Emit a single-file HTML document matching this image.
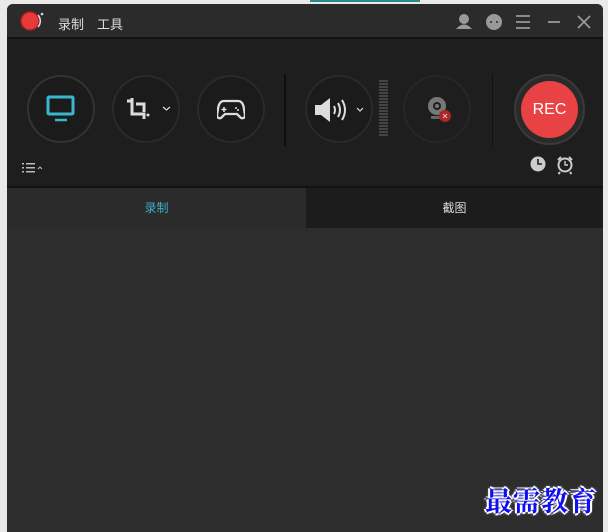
<!DOCTYPE html>
<html><head><meta charset="utf-8"><style>
*{margin:0;padding:0;box-sizing:border-box}
body{width:608px;height:532px;background:#e9e9e9;position:relative;overflow:hidden;font-family:"Liberation Sans","Noto Sans CJK SC",sans-serif}
.a{position:absolute}
.win{left:7px;top:4px;width:596px;height:528px;background:#2d2d2d;border-radius:6px 6px 0 0;overflow:hidden}
.c{position:absolute;border-radius:50%;border:2px solid #2a2a2a;background:#1b1b1b}
</style></head><body>
<div class="a" style="left:310px;top:0;width:110px;height:2px;background:#2a8a8a"></div>
<div class="a win">
 <div class="a" style="left:0;top:0;width:596px;height:33px;background:#2b2b2b"></div>
 <div class="a" style="left:0;top:33px;width:596px;height:2px;background:#121212"></div>
 <div class="a" style="left:0;top:35px;width:596px;height:147px;background:#1e1e1e"></div>
 <div class="a" style="left:0;top:182px;width:596px;height:2px;background:#121212"></div>
 <div class="a" style="left:0;top:184px;width:299px;height:40px;background:#2b2b2b;color:#3ab0c8;font-size:12px;text-align:center;line-height:40px">录制</div>
 <div class="a" style="left:299px;top:184px;width:297px;height:40px;background:#1c1c1c;color:#ddd;font-size:12px;text-align:center;line-height:40px">截图</div>
</div>
<svg class="a" style="left:20px;top:10px" width="26" height="22"><circle cx="10" cy="11" r="9" fill="#e83a3a" stroke="#a82020" stroke-width="1.5"/><path d="M18 5 A9 9 0 0 1 18 17" stroke="#ddd" stroke-width="1.5" fill="none"/><circle cx="22" cy="4" r="1.3" fill="#ddd"/></svg>
<div class="a" style="left:58px;top:14px;color:#ddd;font-size:13px">录制</div>
<div class="a" style="left:97px;top:14px;color:#ddd;font-size:13px">工具</div>
<svg class="a" style="left:452px;top:11px" width="150" height="22" fill="#999" stroke="#999">
 <circle cx="12" cy="8" r="5" stroke="none"/><path d="M4 18 Q12 9 20 18Z" stroke="none"/>
 <circle cx="42" cy="11" r="8" stroke="none"/><circle cx="39" cy="11" r="1" fill="#2b2b2b" stroke="none"/><circle cx="45" cy="11" r="1" fill="#2b2b2b" stroke="none"/>
 <path d="M64 5h14M64 11h14M64 17h14" stroke-width="1.8" fill="none"/>
 <path d="M96 11h12" stroke-width="1.8"/><path d="M126 5l12 12M138 5l-12 12" stroke-width="1.8"/>
</svg>
<div class="c" style="left:27px;top:75px;width:68px;height:68px;border-color:#333"></div>
<svg class="a" style="left:46px;top:95px" width="30" height="28"><rect x="2" y="2" width="25" height="17" rx="1" fill="none" stroke="#3ab6cf" stroke-width="3"/><path d="M9 25h12" stroke="#3ab6cf" stroke-width="2.5"/></svg>
<div class="c" style="left:112px;top:75px;width:68px;height:68px"></div>
<svg class="a" style="left:125px;top:96px" width="50" height="26" fill="none" stroke="#ddd" stroke-width="3"><path d="M2 5h5M7 2v16h12v5M11 8h8v8"/><circle cx="23" cy="19" r="1.5" fill="#ddd" stroke="none"/><path d="M38 11l3.5 3 3.5-3" stroke-width="1.2"/></svg>
<div class="c" style="left:197px;top:75px;width:68px;height:68px"></div>
<svg class="a" style="left:217px;top:98px" width="28" height="22"><path d="M7 3h14q5 0 6 8l1 6q0 4-4 3l-4-4h-12l-4 4q-4 1-4-3l1-6q1-8 6-8z" fill="none" stroke="#ddd" stroke-width="2.3"/><path d="M7 9v5M4.5 11.5h5" stroke="#ddd" stroke-width="1.6"/><circle cx="19" cy="10" r="1" fill="#ddd"/><circle cx="21" cy="12" r="1" fill="#ddd"/></svg>
<div class="a" style="left:284px;top:74px;width:2px;height:72px;background:#0e0e0e"></div>
<div class="c" style="left:305px;top:75px;width:68px;height:68px"></div>
<svg class="a" style="left:313px;top:95px" width="56" height="30" fill="none" stroke="#ddd"><path d="M2 10h6l9-7v24l-9-7h-6z" fill="#ddd" stroke="none"/><path d="M21 11q2 4 0 8M25 8q4 7 0 14M29 5q6 10 0 20" stroke-width="2"/><path d="M44 13l3 3 3-3" stroke-width="1.2"/></svg>
<div class="a" style="left:379px;top:80px;width:9px;height:57px;background:repeating-linear-gradient(#444 0 2px,#1e1e1e 2px 3px)"></div>
<div class="c" style="left:403px;top:75px;width:68px;height:68px;background:#1e1e1e;border-color:#262626"></div>
<svg class="a" style="left:424px;top:94px" width="30" height="32"><circle cx="13" cy="12" r="9" fill="#777"/><circle cx="13" cy="12" r="4" fill="#1e1e1e"/><circle cx="13" cy="12" r="2" fill="#777"/><path d="M7 22h12v3h-12z" fill="#666"/><circle cx="21" cy="22" r="6" fill="#a82828"/><path d="M19 20l4 4M23 20l-4 4" stroke="#eaa" stroke-width="1.2"/></svg>
<div class="a" style="left:492px;top:74px;width:1px;height:72px;background:#111"></div>
<div class="a" style="left:514px;top:74px;width:71px;height:71px;border-radius:50%;background:#2a2a2a;border:2px solid #3a3a3a"></div>
<div class="a" style="left:521px;top:81px;width:57px;height:57px;border-radius:50%;background:#e84245;color:#fff;font-size:16px;text-align:center;line-height:57px">REC</div>
<svg class="a" style="left:528px;top:155px" width="48" height="20"><circle cx="10" cy="9" r="7.5" fill="#ccc"/><path d="M10 4v5h4" stroke="#1e1e1e" stroke-width="1.6" fill="none"/><circle cx="37" cy="10" r="6.5" fill="none" stroke="#ccc" stroke-width="2"/><path d="M37 6v4h3" stroke="#ccc" stroke-width="1.4" fill="none"/><path d="M30 5l3-3M44 5l-3-3M32 17l-1.5 2M42 17l1.5 2" stroke="#ccc" stroke-width="2"/></svg>
<svg class="a" style="left:22px;top:162px" width="24" height="12" fill="#bbb"><rect x="0" y="1" width="2" height="1.5"/><rect x="0" y="5" width="2" height="1.5"/><rect x="0" y="9" width="2" height="1.5"/><rect x="4" y="1" width="9" height="1.5"/><rect x="4" y="5" width="9" height="1.5"/><rect x="4" y="9" width="9" height="1.5"/><path d="M16 7l2-2 2 2" stroke="#bbb" fill="none"/></svg>
<div class="a" style="left:485px;top:484px;color:#1010ee;font-size:27px;line-height:32px;font-weight:bold;font-family:'Noto Serif CJK SC',serif;letter-spacing:1px;text-shadow:0 0 3px #fff,0 0 3px #fff,2px 0 0 #fff,-2px 0 0 #fff,0 2px 0 #fff,0 -2px 0 #fff">最需教育</div>
</body></html>
